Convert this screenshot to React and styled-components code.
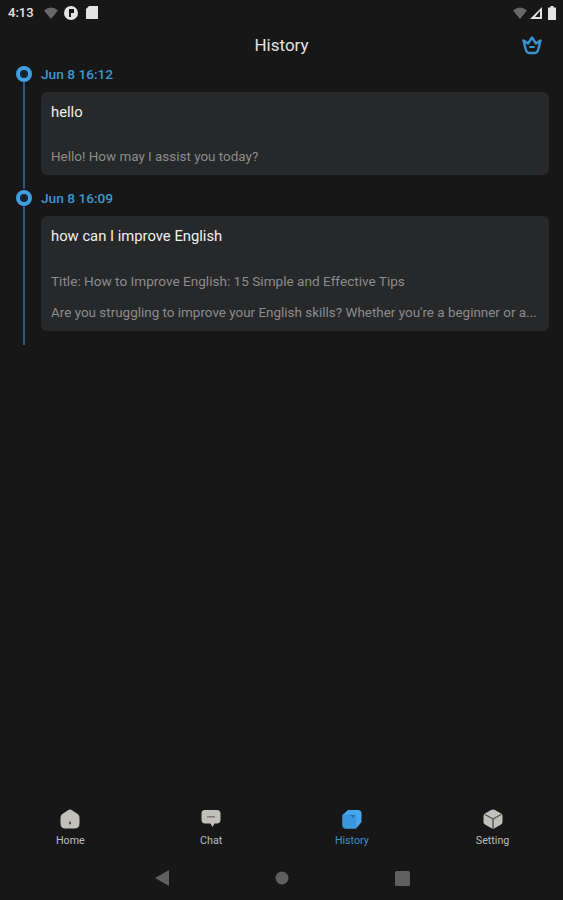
import styled, { createGlobalStyle } from 'styled-components'

const GlobalStyle = createGlobalStyle`
    html, body {
        margin: 0;
        padding: 0;
        background: #171717;
    }
    * {
        box-sizing: border-box;
    }
`

const Screen = styled.div`
    width: 563px;
    height: 900px;
    display: flex;
    flex-direction: column;
    background: #171717;
    font-family: Roboto, "Liberation Sans", sans-serif;
    overflow: hidden;
`

const StatusBar = styled.div`
    height: 25px;
    padding: 0 7px 0 8px;
    display: flex;
    align-items: center;
    justify-content: space-between;
`

const StatusGroup = styled.div`
    display: flex;
    align-items: center;
    gap: ${props => props.gap}px;
`

const Clock = styled.span`
    color: #e4e4e4;
    font-size: 13px;
    font-weight: 500;
    margin-right: 4px;
`

const Header = styled.header`
    height: 40px;
    padding: 0 20px 0 0;
    display: flex;
    align-items: center;
    position: relative;
    justify-content: flex-end;
`

const Title = styled.h1`
    position: absolute;
    left: 0;
    right: 0;
    margin: 0;
    text-align: center;
    color: #e2e2e2;
    font-size: 17px;
    font-weight: 400;
`

const Timeline = styled.main`
    flex: 1;
    padding-right: 14px;
`

const Entry = styled.section`
    display: flex;
`

const Rail = styled.div`
    width: 41px;
    flex: none;
    padding-left: 16px;
    display: flex;
    flex-direction: column;
    align-items: flex-start;
`

const Dot = styled.div`
    width: 16px;
    height: 16px;
    margin-top: 1px;
    flex: none;
    border-radius: 50%;
    border: 4px solid #3f9fe0;
    background: #17232e;
`

const Line = styled.div`
    width: 2px;
    flex: 1;
    margin-left: 7px;
    background: #2f5688;
`

const Body = styled.div`
    flex: 1;
    min-width: 0;
    padding-bottom: 14px;
`

const DateLabel = styled.div`
    height: 18px;
    margin-bottom: 9px;
    line-height: 18px;
    color: #3b97d6;
    font-size: 13.7px;
    font-weight: 500;
`

const Card = styled.article`
    padding: 10px 10px 9px 10px;
    border-radius: 6px;
    background: #27282a;
`

const Question = styled.div`
    color: #f0f0f0;
    font-size: 14.8px;
    line-height: 20px;
    margin-bottom: 26px;
`

const Answer = styled.div`
    color: #8c8c8c;
    font-size: ${props => props.size || 13.45}px;
    line-height: 18px;
    white-space: nowrap;
    margin-top: ${props => props.top || 0}px;
`

const TabBar = styled.nav`
    height: 53px;
    padding-top: 6px;
    display: flex;
`

const Tab = styled.div`
    flex: 1;
    display: flex;
    flex-direction: column;
    align-items: center;
    gap: 6px;
    line-height: 12px;
    color: ${props => props.active ? '#3b8fd0' : '#bdbdbd'};
    font-size: 10.7px;
`

const NavBar = styled.div`
    height: 44px;
    padding-left: 1px;
    display: flex;
    align-items: center;
    justify-content: center;
    gap: 106px;
`

const CrownIcon = () => (
    <svg width="22" height="22" viewBox="0 0 22 22" fill="none" stroke="#3b92cf" strokeWidth="2.4" strokeLinejoin="round" strokeLinecap="round">
        <path d="M2.5 6.5 L7 9.5 L11 3.5 L15 9.5 L19.5 6.5 L17.5 14.5 Q16.5 19 14 19 H8 Q5.5 19 4.5 14.5 Z" />
        <path d="M9 13 H13" strokeWidth="1.8" />
    </svg>
)

const HomeIcon = () => (
    <svg width="20" height="20" viewBox="0 0 20 20">
        <path d="M10 0.5 Q11 0.5 12 1.2 L18 5.2 Q19.5 6.4 19.5 8.5 V14.5 Q19.5 19.5 14.5 19.5 H5.5 Q0.5 19.5 0.5 14.5 V8.5 Q0.5 6.4 2 5.2 L8 1.2 Q9 0.5 10 0.5 Z" fill="#c2c0ba" />
        <rect x="9" y="12.5" width="2" height="3" rx="1" fill="#4a4a4a" />
    </svg>
)

const ChatIcon = () => (
    <svg width="20" height="20" viewBox="0 0 20 20">
        <path d="M4 1 H16 Q19.5 1 19.5 4.5 V10.5 Q19.5 14.5 16 14.5 H13.5 L11.5 18 L9.5 14.5 H4 Q0.5 14.5 0.5 10.5 V4.5 Q0.5 1 4 1 Z" fill="#c2c0ba" />
        <rect x="6" y="7" width="8" height="1.5" fill="#7a7a7a" />
    </svg>
)

const HistoryIcon = () => (
    <svg width="20" height="20" viewBox="0 0 20 20">
        <path d="M6 1 H16 Q19.5 1 19.5 4.5 V13 L15 18.5 Q14 19.5 12 19.5 H4 Q0.5 19.5 0.5 16 V6 Z" fill="#46a6ee" />
        <path d="M0.5 5.5 H14.5 V19.5 H4 Q0.5 19.5 0.5 16 Z" fill="#3b97dc" />
        <path d="M8 6 H13 L11 9 Z" fill="#27699f" />
    </svg>
)

const SettingIcon = () => (
    <svg width="20" height="20" viewBox="0 0 20 20">
        <path d="M10 0.5 Q11 0.5 12 1 L18 4.5 Q19.5 5.5 19.5 7 V13 Q19.5 14.5 18 15.5 L12 19 Q10 20 8 19 L2 15.5 Q0.5 14.5 0.5 13 V7 Q0.5 5.5 2 4.5 L8 1 Q9 0.5 10 0.5 Z" fill="#c2c0ba" />
        <path d="M2 5.5 L10 10 L18 5.5 M10 10 V19" fill="none" stroke="#555" strokeWidth="1.4" />
    </svg>
)

const WifiIcon = () => (
    <svg width="14" height="13" viewBox="0 0 14 13">
        <path d="M0 4.5 Q7 -1.5 14 4.5 L7 13 Z" fill="#686868" />
    </svg>
)

const App = () => {
    return (
        <Screen>
            <GlobalStyle />
            <StatusBar>
                <StatusGroup gap={6}>
                    <Clock>4:13</Clock>
                    <WifiIcon />
                    <svg width="14" height="14" viewBox="0 0 14 14">
                        <circle cx="7" cy="7" r="7" fill="#e4e4e4" />
                        <path d="M5 3 H10 V7 H7 V11 H5 Z" fill="#171717" />
                    </svg>
                    <svg width="12" height="13" viewBox="0 0 12 13" style={{ marginLeft: 2 }}>
                        <path d="M3 0 H12 V13 H0 V3 Z" fill="#e4e4e4" />
                    </svg>
                </StatusGroup>
                <StatusGroup gap={3}>
                    <WifiIcon />
                    <svg width="12" height="12" viewBox="0 0 12 12">
                        <path d="M12 0 V12 H0 Z M10 4 L5 10 H10 Z" fill="#e4e4e4" fillRule="evenodd" />
                    </svg>
                    <svg width="8" height="14" viewBox="0 0 8 14" style={{ marginLeft: 3 }}>
                        <path d="M2.5 0 H5.5 V1.5 H8 V14 H0 V1.5 H2.5 Z" fill="#e4e4e4" />
                    </svg>
                </StatusGroup>
            </StatusBar>
            <Header>
                <Title>History</Title>
                <CrownIcon />
            </Header>
            <Timeline>
                <Entry>
                    <Rail>
                        <Dot />
                        <Line />
                    </Rail>
                    <Body>
                        <DateLabel>Jun 8 16:12</DateLabel>
                        <Card>
                            <Question>hello</Question>
                            <Answer>Hello! How may I assist you today?</Answer>
                        </Card>
                    </Body>
                </Entry>
                <Entry>
                    <Rail>
                        <Dot />
                        <Line />
                    </Rail>
                    <Body>
                        <DateLabel>Jun 8 16:09</DateLabel>
                        <Card>
                            <Question>how can I improve English</Question>
                            <Answer size={13.6}>Title: How to Improve English: 15 Simple and Effective Tips</Answer>
                            <Answer top={14}>Are you struggling to improve your English skills? Whether you're a beginner or a...</Answer>
                        </Card>
                    </Body>
                </Entry>
            </Timeline>
            <TabBar>
                <Tab><HomeIcon />Home</Tab>
                <Tab><ChatIcon />Chat</Tab>
                <Tab active><HistoryIcon />History</Tab>
                <Tab><SettingIcon />Setting</Tab>
            </TabBar>
            <NavBar>
                <svg width="14" height="16" viewBox="0 0 14 16"><path d="M14 0 V16 L0 8 Z" fill="#5f5f5f" /></svg>
                <svg width="14" height="14" viewBox="0 0 14 14"><circle cx="7" cy="7" r="6.5" fill="#5f5f5f" /></svg>
                <svg width="15" height="15" viewBox="0 0 15 15"><rect width="15" height="15" rx="1.5" fill="#5f5f5f" /></svg>
            </NavBar>
        </Screen>
    )
}

export default App
